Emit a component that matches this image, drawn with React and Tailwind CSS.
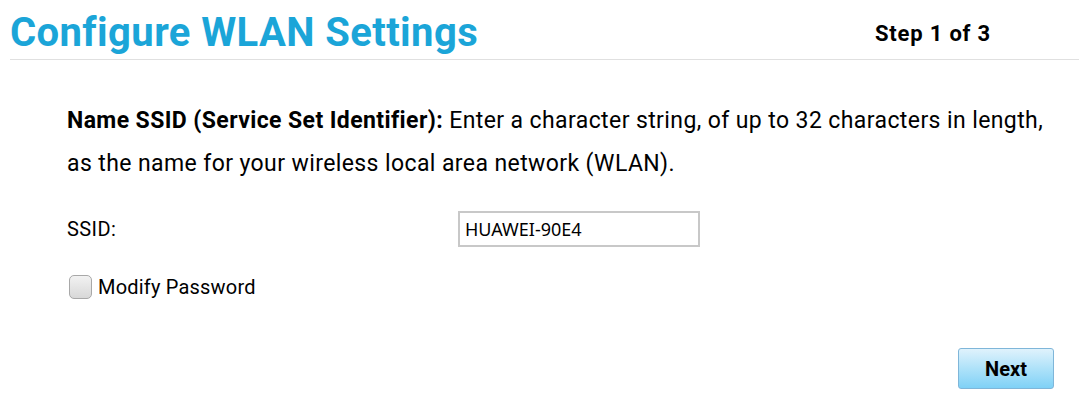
export default function App() {
  return (
    <div className="w-[1079px] h-[407px] bg-white overflow-hidden font-['Roboto',sans-serif] text-black">
      <div className="ml-[10px] flex items-start justify-between border-b border-[#e0e0e0] h-[60px]">
        <h1 className="mt-[9px] text-[40px] leading-[48px] font-bold tracking-[0.4px] text-[#1ba5d8]">
          Configure WLAN Settings
        </h1>
        <div className="mt-[19px] mr-[88px] text-[22px] leading-[30px] font-bold tracking-[0.8px]">Step 1 of 3</div>
      </div>

      <div className="pl-[67px] pr-[25px]">
        <p className="mt-[39px] text-[23px] leading-[43px] tracking-[0.4px]">
          <span className="font-bold">Name SSID (Service Set Identifier):</span> Enter a character string, of up to 32
          characters in length, as the name for your wireless local area network (WLAN).
        </p>

        <div className="mt-[26px] flex items-center h-[36px]">
          <label className="w-[391px] text-[20px] tracking-[0.4px]">SSID:</label>
          <input
            type="text"
            defaultValue="HUAWEI-90E4"
            className="w-[242px] h-[36px] border-2 border-[#c8c8c8] px-[5px] text-[18px] font-['Noto_Sans',sans-serif] outline-none"
          />
        </div>

        <label className="mt-[25px] flex items-center gap-[6px] text-[20px] tracking-[0.2px]">
          <span className="ml-[2px] w-[23px] h-[24px] rounded-[5px] border border-[#a8a8a8] bg-gradient-to-b from-[#f2f2f2] to-[#d8d8d8]" />
          Modify Password
        </label>
      </div>

      <div className="flex justify-end pr-[25px] mt-[46px]">
        <button className="w-[96px] h-[41px] rounded-[3px] border border-[#7fb6d9] bg-gradient-to-b from-[#dff2fc] via-[#aee2f9] to-[#7fd1f6] text-[20px] font-bold">
          Next
        </button>
      </div>
    </div>
  );
}
